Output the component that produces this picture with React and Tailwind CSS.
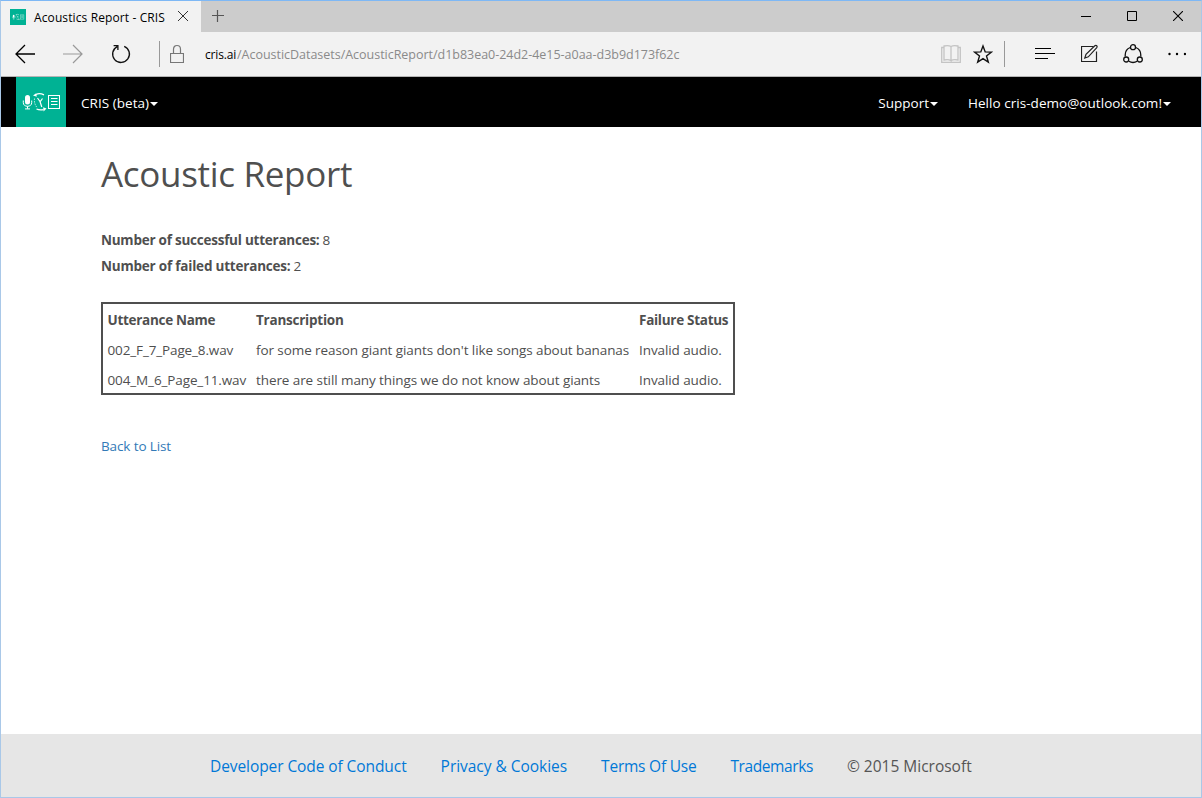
import React from 'react';

function Logo({ className }) {
  return (
    <svg className={className} viewBox="0 0 50 50" fill="none" stroke="#fff">
      <rect width="50" height="50" fill="#00b294" stroke="none" />
      <rect x="9" y="18" width="5" height="9.5" rx="2.5" fill="#fff" stroke="none" />
      <path d="M7.3 23.5v2.2c0 2.3 1.8 3.6 4.2 3.6s4.2-1.3 4.2-3.6v-2.2M11.5 29.3v2.4M9 31.9h5" strokeWidth="1" />
      <path d="M20 17.5c2-1 5-1 8 .3" strokeWidth="1.3" />
      <path d="M17 18.500l3.200-2.300.6 3.600z" fill="#fff" stroke="none" />
      <path d="M18.500 21.500c-.5 3.500.5 6.500 2.500 9" strokeWidth=".7" strokeDasharray="1.500 1" />
      <path d="M21.500 21l2.500 3.500 1.800 5.500M24 24.800l2.500-3.300" strokeWidth="1.200" />
      <path d="M20.500 32c2 .9 4.500 1 7 .6" strokeWidth="1.300" />
      <path d="M30.500 31.500l-3.400-1.200.5 4.200z" fill="#fff" stroke="none" />
      <rect x="32.500" y="18.500" width="11" height="13" />
      <path d="M35 21.500h6.500M35 24.500h6.500M35 27.500h6.500" />
    </svg>
  );
}

function Caret() {
  return (
    <svg className="ml-px h-1 w-2" viewBox="0 0 8 4">
      <path d="M0 0h8L4 4z" fill="#fff" />
    </svg>
  );
}

function TabStrip() {
  return (
    <div className="flex h-[31px] shrink-0 bg-[#cccccc]">
      <div className="flex w-[200px] items-center bg-[#f2f2f2] pl-[9px]">
        <Logo className="size-4" />
        <span className="ml-2 w-[136px] pt-[3px] text-[12px] leading-4 tracking-[0.113px] whitespace-nowrap text-black">Acoustics Report - CRIS</span>
        <svg className="mb-px ml-[7px] size-3" viewBox="0 0 12 12" stroke="#333" fill="none">
          <path d="M1 1l10 10M11 1L1 11" />
        </svg>
      </div>
      <svg className="mt-[9px] ml-[11px] size-3" viewBox="0 0 12 12" stroke="#555" fill="none">
        <path d="M0 5.500h12M5.500 0v12" strokeWidth="1.200" />
      </svg>
      <div className="mt-[10px] mr-[18px] ml-auto flex gap-[36px]">
        <svg className="size-[10px]" viewBox="0 0 10 10"><path d="M0 5h10v1H0z" /></svg>
        <svg className="size-[10px]" viewBox="0 0 10 10" fill="none" stroke="#000"><path d="M.5.5h9v9h-9z" /></svg>
        <svg className="size-[10px]" viewBox="0 0 10 10" fill="none" stroke="#000"><path d="M0 0l10 10M10 0L0 10" strokeWidth="1.100" /></svg>
      </div>
    </div>
  );
}

function Toolbar() {
  return (
    <div className="flex h-[45px] shrink-0 items-center border-b border-[#b5b5b5] bg-[#f2f2f2] pl-[14px]">
      <svg className="h-5 w-5" viewBox="0 0 20 20" fill="none" stroke="#000" strokeWidth="1.300">
        <path d="M20 10H1M10 1L1 10l9 9" />
      </svg>
      <svg className="ml-7 h-5 w-5" viewBox="0 0 20 20" fill="none" stroke="#999" strokeWidth="1.200">
        <path d="M0 10h19M10 1l9 9-9 9" />
      </svg>
      <svg className="ml-7 h-5 w-5" viewBox="0 0 20 20" fill="none" stroke="#111" strokeWidth="1.300">
        <path d="M13.200 2.300A8.400 8.400 0 1 1 6.200 2.600M2.600 1.700h4.300v4.300" />
      </svg>
      <div className="ml-[28px] h-[26px] w-px bg-[#999]" />
      <svg className="ml-[10px] h-5 w-[14px]" viewBox="0 0 14 20" fill="none" stroke="#777" strokeWidth="1.200">
        <path d="M.5 9.500h13v9H.5zM3.500 9.500V5.200C3.500 2.900 5 1.500 7 1.500s3.500 1.400 3.500 3.700v4.300" />
      </svg>
      <div className="ml-[21px] flex pt-px text-[12.500px] leading-4 whitespace-nowrap">
        <span className="w-[32px] text-[12px] tracking-[-0.150px] text-black">cris.ai</span>
        <span className="text-[12.5px] tracking-[-0.022px] text-[#8a8a8a]">/AcousticDatasets/AcousticReport/d1b83ea0-24d2-4e15-a0aa-d3b9d173f62c</span>
      </div>
      <div className="mr-[15px] ml-auto flex items-center">
        <svg className="h-5 w-5" viewBox="0 0 20 20" fill="none" stroke="#c4c4c4" strokeWidth="1.300">
          <path d="M10 2.500C8.500 1.600 5 1.600 3 2v14c2-.4 5.500-.4 7 .8zM10 2.500c1.500-.9 5-.9 7-.5v14c-2-.4-5.500-.4-7 .8M3 3.500H.7v14.800h18.600V3.500H17" />
        </svg>
        <svg className="ml-3 h-5 w-5" viewBox="0 0 20 20" fill="none" stroke="#111" strokeWidth="1.400">
          <path d="M10 2l2.200 5.900 6.300.2-5 3.900 1.800 6.100-5.300-3.500-5.300 3.500 1.800-6.100-5-3.900 6.300-.2z" />
        </svg>
        <div className="ml-[11px] h-[26px] w-px bg-[#999]" />
        <svg className="ml-[30px] h-5 w-5" viewBox="0 0 20 20" fill="none" stroke="#000" strokeWidth="1.100">
          <path d="M0 4.500h16M0 9.500h20M0 14.500h13" />
        </svg>
        <svg className="ml-[26px] h-5 w-5" viewBox="0 0 20 20" fill="none" stroke="#222" strokeWidth="1.200">
          <path d="M12.500 2.500H.5v15h15V7.500" />
          <path d="M3.800 14l1.200-3.600L13.800 1.700c1.500-1 3 .5 2 2L7.300 12.800z" strokeWidth="1.200" />
        </svg>
        <svg className="ml-[22px] h-5 w-5" viewBox="0 0 20 20" fill="none" stroke="#111" strokeWidth="1.300">
          <path d="M7.300 3.500C4 4.800 1.800 8.300 2.300 12.500M12.700 3.500c3.300 1.300 5.500 4.800 5 9M5.800 17.300c2.600 1.500 5.800 1.500 8.400 0" />
          <circle cx="10" cy="3.200" r="2.500" /><circle cx="3.200" cy="15.500" r="2.500" /><circle cx="16.800" cy="15.500" r="2.500" />
        </svg>
        <svg className="ml-[25px] h-5 w-[18px]" viewBox="0 0 18 20">
          <circle cx="1.500" cy="10" r="1.200" /><circle cx="9" cy="10" r="1.200" /><circle cx="17" cy="10" r="1.200" />
        </svg>
      </div>
    </div>
  );
}

function NavBar() {
  return (
    <nav className="flex h-[50px] shrink-0 items-center bg-black pr-[30px] pl-[15px] text-[13.5px] whitespace-nowrap text-white">
      <Logo className="size-[50px]" />
      <div className="ml-[15px] flex items-center pt-[3px] tracking-[0.040px]">CRIS (beta)<Caret /></div>
      <div className="ml-auto flex items-center pt-[3px]">Support<Caret /></div>
      <div className="ml-[30px] flex items-center pt-[3px] tracking-[0.041px]">Hello cris-demo@outlook.com!<Caret /></div>
    </nav>
  );
}

function Report() {
  return (
    <main className="flex-1 pt-[27px] pl-[100px] text-[13.5px] text-[#4f4f4f]">
      <h1 className="text-[35px] leading-[40px] tracking-[-0.310px]">Acoustic Report</h1>
      <div className="mt-[33px] leading-[26px]">
        <p><b className="mr-[3px] tracking-[-0.240px]">Number of successful utterances:</b>8</p>
        <p><b className="mr-[3px] tracking-[-0.205px]">Number of failed utterances:</b>2</p>
      </div>
      <div className="mt-[23px] h-[93px] w-[634px] border-2 border-[#4f4f4f] pt-px pl-[4.5px] leading-[30px] whitespace-nowrap">
        <div className="grid h-[30px] grid-cols-[148.5px_383px_1fr] font-bold">
          <span className="tracking-[-0.295px]">Utterance Name</span>
          <span className="tracking-[-0.240px]">Transcription</span>
          <span className="tracking-[-0.280px]">Failure Status</span>
        </div>
        <div className="grid h-[30px] grid-cols-[148.5px_383px_1fr] tracking-[-0.085px]">
          <span className="tracking-[-0.130px]">002_F_7_Page_8.wav</span>
          <span>for some reason giant giants don't like songs about bananas</span>
          <span>Invalid audio.</span>
        </div>
        <div className="grid h-[28px] grid-cols-[148.5px_383px_1fr] tracking-[-0.085px]">
          <span className="tracking-[-0.120px]">004_M_6_Page_11.wav</span>
          <span>there are still many things we do not know about giants</span>
          <span>Invalid audio.</span>
        </div>
      </div>
      <a className="mt-[41px] block leading-5 tracking-[-0.120px] text-[#337ab7]">Back to List</a>
    </main>
  );
}

function Footer() {
  return (
    <footer className="flex h-[63px] shrink-0 items-center gap-[34px] bg-[#e6e6e6] pt-[2px] pl-[209px] text-[15.5px] whitespace-nowrap text-[#0078d7]">
      <a className="tracking-[-0.080px]">Developer Code of Conduct</a>
      <a className="tracking-[-0.030px]">Privacy &amp; Cookies</a>
      <a className="tracking-[-0.230px]">Terms Of Use</a>
      <a className="tracking-[-0.400px]">Trademarks</a>
      <span className="text-[#555]">© 2015 Microsoft</span>
    </footer>
  );
}

export default function App() {
  return (
    <div className="flex h-[798px] w-[1202px] flex-col overflow-hidden border border-[#a9c8e8] border-t-[#7eb8f5] bg-white font-['Open_Sans','Noto_Sans',sans-serif]">
      <TabStrip />
      <Toolbar />
      <NavBar />
      <Report />
      <Footer />
    </div>
  );
}
